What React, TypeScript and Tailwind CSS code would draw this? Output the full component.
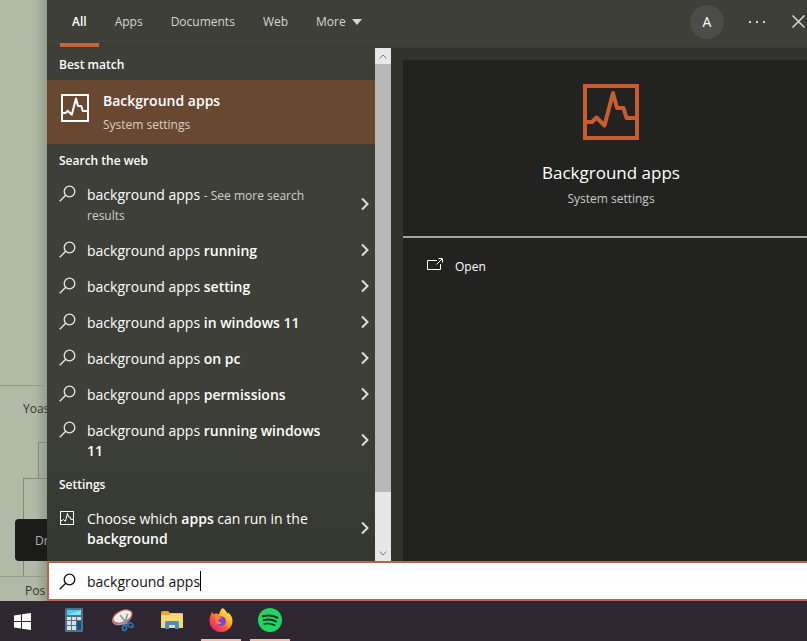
import { useState } from "react";
import type { ReactNode } from "react";
import clsx from "clsx";

const TABS = ["All", "Apps", "Documents", "Web"];

interface Suggestion {
  bold?: string;
  note?: string;
}

const SUGGESTIONS: Suggestion[] = [
  { note: "- See more search results" },
  { bold: "running" },
  { bold: "setting" },
  { bold: "in windows 11" },
  { bold: "on pc" },
  { bold: "permissions" },
  { bold: "running windows 11" },
];

function ActivityIcon({ className, stroke }: { className: string; stroke: number }) {
  return (
    <svg viewBox="0 0 56 56" className={className} fill="none" stroke="currentColor" strokeWidth={stroke} aria-hidden="true">
      <rect x={stroke / 2} y={stroke / 2} width={56 - stroke} height={56 - stroke} />
      <path d="M3 38H9L13.500 33.500L21.500 41.500L30 9L34 24H40.500L43.500 34H53" strokeLinejoin="round" />
    </svg>
  );
}

function SearchIcon({ className }: { className?: string }) {
  return (
    <svg viewBox="0 0 17 17" className={clsx("h-[17px] w-[17px] shrink-0", className)} fill="none" stroke="currentColor" aria-hidden="true">
      <circle cx="10.500" cy="6.500" r="5.300" strokeWidth="1.300" />
      <path d="M6.700 10.300L0.700 16.300" strokeWidth="1.300" />
    </svg>
  );
}

function ChevronIcon() {
  return (
    <svg viewBox="0 0 8 14" className="mb-[2px] h-[14px] w-2 shrink-0 text-[#dededb]" fill="none" stroke="currentColor" strokeWidth="2" aria-hidden="true">
      <path d="M1 1.500L6.500 7L1 12.500" />
    </svg>
  );
}

function WindowsIcon() {
  return (
    <svg viewBox="0 0 17 17" className="h-[17px] w-[17px]" fill="#fff" aria-hidden="true">
      <path d="M0 2.400L7 1.400V8H0ZM8 1.250L17 0V8H8ZM0 9H7V15.600L0 14.600ZM8 9H17V17L8 15.750Z" />
    </svg>
  );
}

function CalculatorIcon() {
  return (
    <svg viewBox="0 0 18 24" className="h-6 w-[18px]" aria-hidden="true">
      <rect width="18" height="24" rx="1" fill="#53708a" />
      <rect x="2" y="2" width="14" height="5" fill="#4ccbee" />
      <path d="M2 7L16 2V7Z" fill="#81e1f5" />
      <g fill="#d8e1e8">
        <path d="M2 9h4v3H2zM7 9h4v3H7zM12 9h4v3h-4zM2 13h4v4H2zM7 13h4v4H7zM2 18h4v4H2zM7 18h4v4H7z" />
      </g>
      <rect x="12" y="13" width="4" height="9" fill="#164d83" />
    </svg>
  );
}

function SnippingIcon() {
  return (
    <svg viewBox="0 0 24 24" className="h-6 w-6" fill="none" aria-hidden="true">
      <ellipse cx="11" cy="10" rx="10.500" ry="6.500" fill="#a99ba0" transform="rotate(-24 11 10)" />
      <ellipse cx="11.500" cy="8.500" rx="10.200" ry="5.800" fill="#f2eeee" stroke="#ca5650" strokeWidth="1.200" transform="rotate(-24 11.500 8.500)" />
      <path d="M9 7L17 17M16.500 6L13 18" stroke="#8997a3" strokeWidth="1.600" />
      <ellipse cx="13.500" cy="20" rx="2" ry="2.500" stroke="#2679b5" strokeWidth="1.700" transform="rotate(18 13.500 20)" />
      <ellipse cx="19.500" cy="17" rx="2.800" ry="2" stroke="#2679b5" strokeWidth="1.700" transform="rotate(35 19.500 17)" />
    </svg>
  );
}

function FolderIcon() {
  return (
    <svg viewBox="0 0 22 18" className="h-[18px] w-[22px]" aria-hidden="true">
      <path d="M0 1.500Q0 0 1.500 0H7L9 2H20.500Q22 2 22 3.500V17H0Z" fill="#e5a72e" />
      <path d="M0 4H8L10 2.500H22V17H0Z" fill="#f8d775" />
      <path d="M4 18V11.500Q4 10 5.500 10H16.500Q18 10 18 11.500V18H14V14H8V18Z" fill="#3e91c6" />
    </svg>
  );
}

function FirefoxIcon() {
  return (
    <svg viewBox="0 0 24 24" className="h-6 w-6" aria-hidden="true">
      <defs>
        <linearGradient id="fox" x1="0.850" y1="0.100" x2="0.150" y2="0.900">
          <stop offset="0" stopColor="#fff04a" />
          <stop offset="0.350" stopColor="#ffae24" />
          <stop offset="0.650" stopColor="#ff543c" />
          <stop offset="1" stopColor="#e42573" />
        </linearGradient>
      </defs>
      <path d="M13.500 0C17 2 17.500 4.500 19 6C19 5 18.700 4.500 18.500 4C22 6.500 23.500 9.500 23.500 13C23.500 19 18.500 24 12 24C5.500 24 .5 19 .5 13C.5 9 1.600 6 3.600 3.500L4 6.500C5 5.500 6 5.200 7.500 5.600C8.500 5.700 9.300 6 10 6.500C10.500 4 11.500 2 13.500 0Z" fill="url(#fox)" />
      <circle cx="12" cy="13" r="5" fill="#7146dc" />
      <path d="M4 7C7 5.500 9 6.500 10.500 8.500H13C12.500 10.500 10 10.500 9.500 12C9 14 11 15 13 14.200C11.500 17.500 7 17 6.500 13C6 11 5.500 9 4 7Z" fill="#ff8130" />
      <path d="M12 6C17 6 19.500 10 18 14C17.800 11 15.500 8.500 12 8Z" fill="#ffc334" />
    </svg>
  );
}

function SpotifyIcon() {
  return (
    <svg viewBox="0 0 24 24" className="h-6 w-6" aria-hidden="true">
      <circle cx="12" cy="12" r="12" fill="#1fd660" />
      <g fill="none" stroke="#162c1e" strokeLinecap="round">
        <path d="M5 8.300C10 6.900 15 7.400 19.300 9.700" strokeWidth="2.200" />
        <path d="M5.700 12.200C10 11 14.300 11.500 18 13.500" strokeWidth="1.900" />
        <path d="M6.300 15.900C10 15 13.500 15.400 16.700 17.200" strokeWidth="1.600" />
      </g>
    </svg>
  );
}

function GroupHeading({ children }: { children: ReactNode }) {
  return <h2 className="flex h-8 items-center px-3 pt-[2px] text-xs font-semibold text-white">{children}</h2>;
}

function ResultRow({ icon, children }: { icon: ReactNode; children: ReactNode }) {
  return (
    <button type="button" className="flex w-full items-center pt-[9px] pr-[6px] pb-[7px] pl-3 text-left hover:bg-white/10">
      <span className="flex w-7 shrink-0 self-start">{icon}</span>
      <span className="min-w-0 flex-1 pr-6 text-sm leading-5 text-white">{children}</span>
      <ChevronIcon />
    </button>
  );
}

function PageBehind() {
  return (
    <aside className="flex w-[47px] shrink-0 flex-col justify-end overflow-hidden bg-linear-to-r from-[#b1b9a7] from-75% to-[#949c8b] text-xs whitespace-nowrap text-[#34382f]">
      <div className="border-t border-[#929a88]">
        <p className="h-14 pt-[15px] pl-[23px] leading-4">Yoas</p>
        <div className="ml-[38px] h-9 border-t border-l border-[#838a79]" />
        <div className="ml-[23px] h-[98px] border-t border-l border-[#838a79] pt-10">
          <button type="button" className="-ml-[9px] h-[42px] w-28 rounded-sm bg-[#1b1c1a] pt-[2px] pl-5 text-left text-[#b3b3ad]">
            Dr
          </button>
        </div>
      </div>
      <p className="h-[25px] border-t border-[#929a88] pt-[6px] pl-[25px] leading-4">Pos</p>
    </aside>
  );
}

function Header() {
  const [active, setActive] = useState("All");

  return (
    <header className="flex h-12 shrink-0 items-start border-b border-[#383a34] bg-[#3d3f38]">
      <nav className="flex gap-1 pl-[13px] text-xs text-[#d6d7d3]">
        {TABS.map((tab) => (
          <button
            key={tab}
            type="button"
            onClick={() => setActive(tab)}
            className={clsx(
              "h-[47px] border-b-4 px-3",
              active === tab ? "border-[#c9623b] font-semibold text-white" : "border-transparent",
            )}
          >
            {tab}
          </button>
        ))}
        <button type="button" className="flex h-[47px] items-center gap-[6px] border-b-4 border-transparent px-3">
          More
          <svg viewBox="0 0 10 6" className="h-[6px] w-[10px]" fill="currentColor" aria-hidden="true">
            <path d="M0 0H10L5 6Z" />
          </svg>
        </button>
      </nav>
      <div className="ml-auto flex h-[43px] items-center pr-[2px] text-[#d9dad6]">
        <button type="button" className="h-[34px] w-[34px] rounded-full bg-[#4b4d48] text-sm text-white" aria-label="Account">
          A
        </button>
        <button type="button" className="ml-[25px] flex h-8 w-4 items-center" aria-label="Options">
          <svg viewBox="0 0 16 2" className="h-[2px] w-4" fill="currentColor" aria-hidden="true">
            <path d="M0 0h2v2H0zM7 0h2v2H7zM14 0h2v2h-2z" />
          </svg>
        </button>
        <button type="button" className="ml-[27px] flex h-8 w-[13px] items-center" aria-label="Close">
          <svg viewBox="0 0 13 13" className="h-[13px] w-[13px]" fill="none" stroke="currentColor" strokeWidth="1.500" aria-hidden="true">
            <path d="M0.500 0.500L12.500 12.500M12.500 0.500L0.500 12.500" />
          </svg>
        </button>
      </div>
    </header>
  );
}

function Results() {
  return (
    <section className="w-[328px] shrink-0 bg-linear-to-b from-[#3d3f38] from-70% to-[#353731] pb-[5px]">
      <GroupHeading>Best match</GroupHeading>
      <button type="button" className="flex h-16 w-full items-start bg-[#694832] px-3 py-[10px] text-left">
        <ActivityIcon className="mx-[2px] mt-1 h-7 w-7 shrink-0 text-white" stroke={4} />
        <span className="ml-3 flex flex-col">
          <span className="text-sm leading-[22px] font-semibold text-white">Background apps</span>
          <span className="pt-[3px] text-xs leading-5 text-[#d9cec7]">System settings</span>
        </span>
      </button>

      <GroupHeading>Search the web</GroupHeading>
      {SUGGESTIONS.map((item) => (
        <ResultRow key={item.bold ?? item.note} icon={<SearchIcon className="text-[#e8e8e5]" />}>
          background apps {item.bold && <span className="font-semibold">{item.bold}</span>}
          {item.note && <span className="text-xs text-[#cfd0cb]">{item.note}</span>}
        </ResultRow>
      ))}

      <GroupHeading>Settings</GroupHeading>
      <ResultRow icon={<ActivityIcon className="mt-[2px] ml-px h-[14px] w-[14px] text-white" stroke={4} />}>
        Choose which <span className="font-semibold">apps</span> can run in the{" "}
        <span className="font-semibold">background</span>
      </ResultRow>
    </section>
  );
}

function Scrollbar() {
  return (
    <div className="flex w-4 shrink-0 flex-col bg-[#e7e7e7] text-[#777]">
      <button type="button" className="flex h-4 items-center justify-center" aria-label="Scroll up">
        <svg viewBox="0 0 8 5" className="h-[5px] w-2" fill="none" stroke="currentColor" aria-hidden="true">
          <path d="M0.500 4.500L4 1L7.500 4.500" />
        </svg>
      </button>
      <div className="flex flex-1 flex-col">
        <div className="grow-[89] basis-0 bg-[#b8b8b8]" />
        <div className="grow-[11] basis-0" />
      </div>
      <button type="button" className="flex h-4 items-center justify-center" aria-label="Scroll down">
        <svg viewBox="0 0 8 5" className="h-[5px] w-2" fill="none" stroke="currentColor" aria-hidden="true">
          <path d="M0.500 0.500L4 4L7.500 0.500" />
        </svg>
      </button>
    </div>
  );
}

function Preview() {
  return (
    <div className="flex min-w-0 flex-1 bg-[#30322c] pt-3 pl-3">
      <section className="min-w-0 flex-1 bg-[#222320]">
        <div className="flex flex-col items-center border-b-2 border-[#a3a3a0] pt-6 pb-[27px] pl-3">
          <ActivityIcon className="h-14 w-14 text-[#c95d30]" stroke={4} />
          <h1 className="mt-[21px] text-[17px] leading-6 text-white">Background apps</h1>
          <p className="mt-1 text-xs leading-5 text-[#cacac7]">System settings</p>
        </div>
        <button type="button" className="mt-[15px] flex items-center gap-3 px-6 py-1 text-xs leading-5 text-white">
          <svg viewBox="0 0 16 12" className="mb-[6px] h-3 w-4" fill="none" stroke="currentColor" aria-hidden="true">
            <path d="M10 2.500H0.500V11.500H13.500V6M9.500 6.500L15 1M11.500 0.500H15.500V4.500" />
          </svg>
          Open
        </button>
      </section>
    </div>
  );
}

function SearchBox() {
  const [query, setQuery] = useState("background apps");

  return (
    <label className="flex h-10 shrink-0 items-center border-2 border-r-0 border-[#b3684a] bg-white pl-[10px] text-[#111]">
      <SearchIcon />
      <input
        type="text"
        aria-label="Search"
        value={query}
        onChange={(e) => setQuery(e.target.value)}
        className="ml-[11px] [field-sizing:content] pt-[2px] text-sm caret-transparent outline-none"
      />
      <span className="h-5 w-px bg-black" />
    </label>
  );
}

const PINNED = [
  { name: "Calculator", icon: <CalculatorIcon />, running: false },
  { name: "Snipping Tool", icon: <SnippingIcon />, running: false },
  { name: "File Explorer", icon: <FolderIcon />, running: false },
  { name: "Firefox", icon: <FirefoxIcon />, running: true },
  { name: "Spotify", icon: <SpotifyIcon />, running: true },
];

function Taskbar() {
  return (
    <footer className="flex h-10 shrink-0 gap-[9px] bg-[#2e2631]">
      <button type="button" className="flex w-[45px] items-center justify-center" aria-label="Start">
        <WindowsIcon />
      </button>
      {PINNED.map((app) => (
        <button
          key={app.name}
          type="button"
          aria-label={app.name}
          className={clsx(
            "flex w-10 items-center justify-center border-b-2",
            app.running ? "border-[#f0beb2]" : "border-transparent",
          )}
        >
          {app.icon}
        </button>
      ))}
    </footer>
  );
}

export default function App() {
  return (
    <div className="flex min-h-screen flex-col overflow-hidden bg-[#2e2631] font-['Open_Sans','Noto_Sans',sans-serif]">
      <div className="flex flex-1">
        <PageBehind />
        <main className="flex min-w-0 flex-1 flex-col">
          <Header />
          <div className="flex flex-1">
            <Results />
            <Scrollbar />
            <Preview />
          </div>
          <SearchBox />
        </main>
      </div>
      <Taskbar />
    </div>
  );
}
